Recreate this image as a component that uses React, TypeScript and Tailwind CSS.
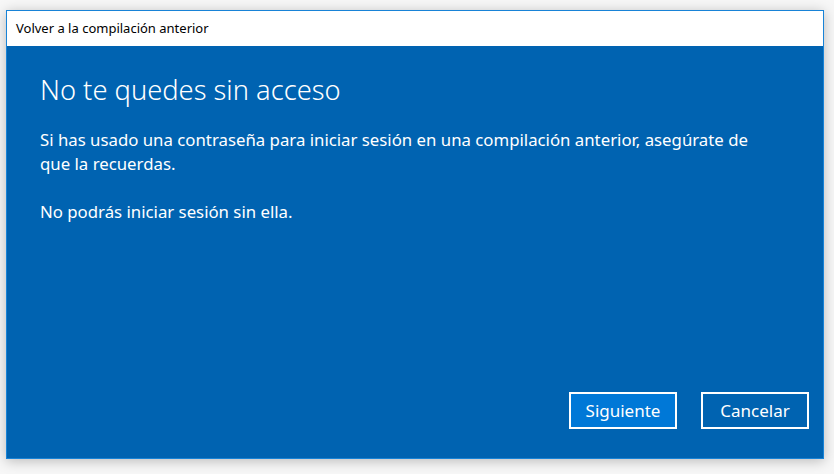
import React from 'react';

const font = { fontFamily: '"Segoe UI", "Noto Sans", "Open Sans", sans-serif' };

export default function App() {
    return (
        <div className="w-[834px] h-[474px] bg-[#f7f7f7] pt-[10px] pl-[6px]" style={font}>
            <div className="w-[818px] h-[449px] flex flex-col border border-[#1883d7] bg-[#0063b1] shadow-[0_2px_12px_rgba(0,0,0,0.25)]">
                {/* Title bar */}
                <div className="h-[35px] bg-white flex items-center pl-[9px] text-[13px] text-black">
                    Volver a la compilación anterior
                </div>

                {/* Content */}
                <div className="flex-1 flex flex-col pl-[33px] pr-[14px] pt-[26px] pb-[29px] text-white">
                    <h1 className="text-[27.3px] font-light leading-[36px]">No te quedes sin acceso</h1>
                    <p className="mt-[20px] text-[16.8px] leading-[24px] w-[730px]">
                        Si has usado una contraseña para iniciar sesión en una compilación anterior, asegúrate de que la recuerdas.
                    </p>
                    <p className="mt-[24px] text-[16.8px] leading-[24px]">No podrás iniciar sesión sin ella.</p>

                    <div className="mt-auto flex justify-end gap-[24px]">
                        <button className="w-[108px] h-[37px] border-2 border-white bg-[#0078d7] text-[17px] text-white">
                            Siguiente
                        </button>
                        <button className="w-[108px] h-[37px] border-2 border-white bg-[#0063b1] text-[17px] text-white">
                            Cancelar
                        </button>
                    </div>
                </div>
            </div>
        </div>
    );
}
